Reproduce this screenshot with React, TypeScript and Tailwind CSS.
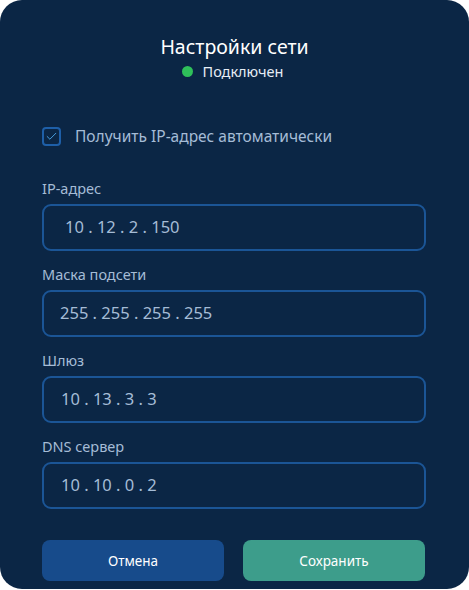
import { Check } from "lucide-react";

const fields = [
  { label: "IP-адрес", value: "10 . 12 . 2 . 150", pad: "pl-[21px]" },
  { label: "Маска подсети", value: "255 . 255 . 255 . 255", pad: "pl-[16px]" },
  { label: "Шлюз", value: "10 . 13 . 3 . 3", pad: "pl-[17px]" },
  { label: "DNS сервер", value: "10 . 10 . 0 . 2", pad: "pl-[17px]" },
];

export default function App() {
  return (
    <div className="w-[469px] h-[590px] bg-white" style={{ fontFamily: '"Noto Sans", "Open Sans", sans-serif' }}>
      <div className="h-[589px] rounded-[22px] bg-[#0b2645] px-[42px] pt-[33px]">
        {/* Header */}
        <div className="flex flex-col items-center">
          <h1 className="text-[19.5px] leading-[28px] text-white">Настройки сети</h1>
          <div className="flex items-center gap-[10px] pr-[4px]">
            <span className="w-[11px] h-[11px] rounded-full bg-[#2fc05a]" />
            <span className="text-[14.5px] leading-[20px] text-[#e6edf5]">Подключен</span>
          </div>
        </div>

        {/* Auto checkbox */}
        <label className="mt-[44px] flex items-center gap-[14px]">
          <span className="w-[19px] h-[19px] rounded-[4px] border-2 border-[#1e5fa8] flex items-center justify-center">
            <Check className="w-[13px] h-[13px] text-[#4aa3e6]" strokeWidth={1.75} />
          </span>
          <span className="text-[15.5px] text-[#a5bcd6]">Получить IP-адрес автоматически</span>
        </label>

        {/* Fields */}
        <div className="mt-[30px] flex flex-col gap-[13px]">
          {fields.map((f) => (
            <div key={f.label}>
              <div className="text-[14.5px] leading-[20px] text-[#a5bcd6]">{f.label}</div>
              <div
                className={`mt-[6px] h-[47px] w-[384px] rounded-[9px] border-2 border-[#1b5596] flex items-center ${f.pad} text-[16.5px] text-[#a5bcd6]`}
              >
                {f.value}
              </div>
            </div>
          ))}
        </div>

        {/* Buttons */}
        <div className="mt-[31px] flex gap-[19px]">
          <button className="w-[182px] h-[41px] rounded-[8px] bg-[#174b8b] text-[13.5px] text-white">Отмена</button>
          <button className="w-[182px] h-[41px] rounded-[8px] bg-[#3d9d8b] text-[13.5px] text-white">Сохранить</button>
        </div>
      </div>
    </div>
  );
}
